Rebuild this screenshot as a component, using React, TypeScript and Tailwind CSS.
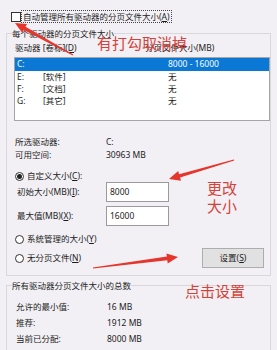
const bg = 'bg-[#f2f0f4]'

function arrowPoints(x1: number, y1: number, x2: number, y2: number, head = 11, headW = 10, tailW = 1.2, neckW = 3.6) {
    const dx = x2 - x1
    const dy = y2 - y1
    const len = Math.hypot(dx, dy)
    const ux = dx / len
    const uy = dy / len
    const nx = -uy
    const ny = ux
    const bx = x2 - ux * head
    const by = y2 - uy * head
    const pts = [
        [x1 + nx * tailW / 2, y1 + ny * tailW / 2],
        [bx + nx * neckW / 2, by + ny * neckW / 2],
        [bx + nx * headW / 2, by + ny * headW / 2],
        [x2, y2],
        [bx - nx * headW / 2, by - ny * headW / 2],
        [bx - nx * neckW / 2, by - ny * neckW / 2],
        [x1 - nx * tailW / 2, y1 - ny * tailW / 2],
    ]
    return pts.map(p => p.map(v => v.toFixed(1)).join(',')).join(' ')
}

function Radio({ checked = false }: { checked?: boolean }) {
    return (
        <span className="w-[9px] h-[9px] rounded-full border border-[#333] bg-white flex items-center justify-center shrink-0">
            {checked && <span className="w-[5px] h-[5px] rounded-full bg-[#222]" />}
        </span>
    )
}

const drives = [
    { letter: 'C:', label: '', size: '8000 - 16000', selected: true },
    { letter: 'E:', label: '[软件]', size: '无' },
    { letter: 'F:', label: '[文档]', size: '无' },
    { letter: 'G:', label: '[其它]', size: '无' },
]

export default function App() {
    return (
        <div className={`relative w-[277px] h-[350px] overflow-hidden ${bg} text-[#1c1c1c] text-[8.5px] font-['Noto_Sans','Noto_Sans_CJK_SC',sans-serif]`}>
            {/* auto manage checkbox */}
            <div className="pt-[10px] pl-[11px] flex items-center h-[23px]">
                <span className="w-[10px] h-[10px] border border-[#333] bg-white shrink-0" />
                <span className="h-[13px] border border-dotted border-[#444] px-[1px] leading-[11px] flex items-center">
                    自动管理所有驱动器的分页文件大小(<u>A</u>)
                </span>
            </div>

            {/* per drive group */}
            <div className="relative mt-[10px] mx-[6px] border border-[#d9d7dc] pb-[7px]">
                <span className={`absolute left-[5px] -top-[6px] ${bg} leading-[11px]`}>每个驱动器的分页文件大小</span>

                <div className="flex pt-[8px] pl-[8px] h-[21px] items-center">
                    <span className="w-[130px]">驱动器 [卷标](<u>D</u>)</span>
                    <span>分页文件大小(MB)</span>
                </div>

                <div className="mt-[2px] ml-[7px] h-[64px] border border-[#a5a5a5] bg-white">
                    {drives.map((d, i) => (
                        <div
                            key={d.letter}
                            className={`flex items-center pl-[2px] ${i === 0 ? 'h-[13px]' : 'h-[12px]'} ${d.selected ? 'bg-[#0a78d4] text-white' : ''}`}
                        >
                            <span className="w-[26px]">{d.letter}</span>
                            <span className="w-[125px]">{d.label}</span>
                            <span>{d.size}</span>
                        </div>
                    ))}
                </div>

                <div className="mt-[15px] pl-[8px]">
                    <div className="flex items-center h-[13px]">
                        <span className="w-[91px]">所选驱动器:</span>
                        <span>C:</span>
                    </div>
                    <div className="flex items-center h-[13px]">
                        <span className="w-[91px]">可用空间:</span>
                        <span>30963 MB</span>
                    </div>
                </div>

                <div className="mt-[8px] pl-[8px] h-[12px] flex items-center">
                    <Radio checked />
                    <span className="ml-[3px]">自定义大小(<u>C</u>):</span>
                </div>

                <div className="flex items-center h-[20px] pl-[10px]">
                    <span className="w-[89px]">初始大小(MB)(<u>I</u>):</span>
                    <span className="w-[63px] h-[20px] border border-[#9a9a9a] bg-white pl-[3px] pt-[3px] leading-[11px]">8000</span>
                </div>
                <div className="flex items-center h-[20px] pl-[10px] mt-[4px]">
                    <span className="w-[89px]">最大值(MB)(<u>X</u>):</span>
                    <span className="w-[63px] h-[20px] border border-[#9a9a9a] bg-white pl-[3px] pt-[3px] leading-[11px]">16000</span>
                </div>

                <div className="mt-[7px] pl-[8px] h-[12px] flex items-center">
                    <Radio />
                    <span className="ml-[3px]">系统管理的大小(<u>Y</u>)</span>
                </div>

                <div className="mt-[3px] pl-[8px] pr-[6px] h-[20px] flex items-center justify-between">
                    <div className="flex items-center">
                        <Radio />
                        <span className="ml-[3px]">无分页文件(<u>N</u>)</span>
                    </div>
                    <button className="w-[62px] h-[20px] border border-[#adadad] bg-[#e1e1e1] flex items-center justify-center">
                        设置(<u>S</u>)
                    </button>
                </div>
            </div>

            {/* totals group */}
            <div className="relative mt-[9px] mx-[6px] border border-[#d9d7dc] pt-[13px] pl-[9px] pb-[12px]">
                <span className={`absolute left-[5px] -top-[6px] ${bg} leading-[11px]`}>所有驱动器分页文件大小的总数</span>
                <div className="flex items-center h-[16px]">
                    <span className="w-[91px]">允许的最小值:</span>
                    <span>16 MB</span>
                </div>
                <div className="flex items-center h-[16px]">
                    <span className="w-[91px]">推荐:</span>
                    <span>1912 MB</span>
                </div>
                <div className="flex items-center h-[16px]">
                    <span className="w-[91px]">当前已分配:</span>
                    <span>8000 MB</span>
                </div>
            </div>

            {/* red annotations */}
            <svg className="absolute inset-0 pointer-events-none" width="277" height="350" viewBox="0 0 277 350">
                <polygon points={arrowPoints(73, 55, 15, 23)} fill="#e5352c" />
                <polygon points={arrowPoints(234, 160, 169, 179)} fill="#e5352c" />
                <polygon points={arrowPoints(93, 268, 178, 257)} fill="#e5352c" />
            </svg>
            <span className="absolute left-[97px] top-[34px] text-[15px] leading-[17px] text-[#d4433b] font-['Noto_Sans_CJK_SC',sans-serif]">有打勾取消掉</span>
            <span className="absolute left-[207px] top-[179px] text-[15px] leading-[18px] text-[#d4433b] font-['Noto_Sans_CJK_SC',sans-serif]">
                更改<br />大小
            </span>
            <span className="absolute left-[185px] top-[282px] text-[15px] leading-[17px] text-[#d4433b] font-['Noto_Sans_CJK_SC',sans-serif]">点击设置</span>
        </div>
    )
}
